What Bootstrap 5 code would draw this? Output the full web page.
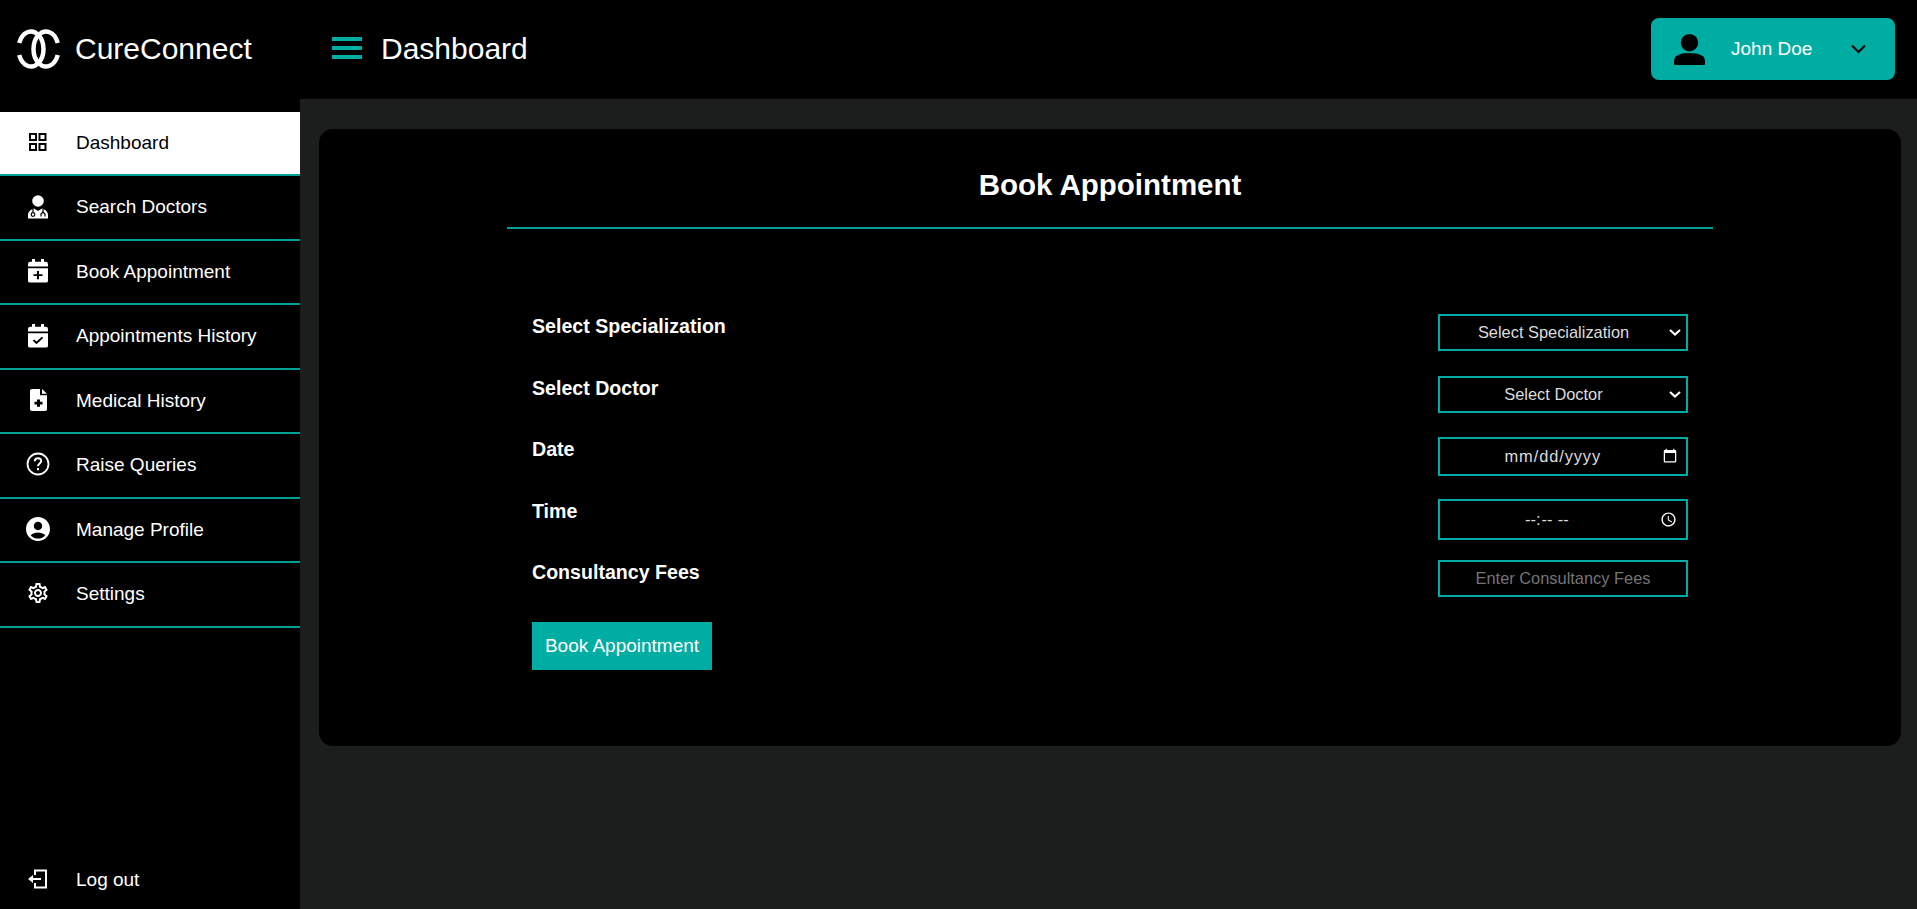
<!DOCTYPE html>
<html lang="en">
<head>
    <meta charset="UTF-8">
    <meta name="viewport" content="width=device-width, initial-scale=1.0">
    <title>CureConnect - Book Appointment</title>
    <link href="https://cdn.jsdelivr.net/npm/bootstrap@5.3.0/dist/css/bootstrap.min.css" rel="stylesheet">
    <style>
        html, body { height: 100%; }
        body { background: #000; color: #fff; font-family: "Liberation Sans", Arial, sans-serif; overflow: hidden; }
        .top-bar { height: 99px; padding-bottom: 1px; background: #000; }
        .brand-box { width: 300px; padding-left: 16px; }
        .brand-name { font-size: 30px; margin: -2px 0 0 14px; }
        .menu-toggle { width: 30px; height: 22px; margin: -2px 0 0 32px; }
        .page-title { font-size: 30px; margin: -2px 0 0 19px; }
        .profile-btn { width: 244px; height: 62px; margin-right: 22px; background: #00ada3; border-radius: 8px; padding: 0 29px 0 23px; color: #fff; font-size: 19px; }
        .profile-name { margin-left: 26px; }
        .side-panel { width: 300px; padding-top: 13px; background: #000; }
        .side-link { height: 64.45px; padding: 0 0 0 76px; color: #fff; font-size: 19px; border-bottom: 2px solid #00a096; text-decoration: none; position: relative; }
        .side-link.current { background: #fff; color: #000; }
        .side-link svg { position: absolute; left: 26px; top: 50%; transform: translateY(-50%); margin-top: -1px; }
        .logout-link { height: 58px; padding: 0 0 0 76px; color: #fff; font-size: 19px; text-decoration: none; position: relative; }
        .logout-link svg { position: absolute; left: 26px; top: 50%; transform: translateY(-50%); margin-top: -1px; }
        .main-area { background: #1c1e1d; padding: 30px 16px 0 19px; }
        .form-panel { height: 617px; background: #000; border-radius: 14px; padding: 0 188px; }
        .form-heading { font-size: 29.5px; font-weight: 700; text-align: center; margin: 0; height: 100px; padding-top: 38px; border-bottom: 2px solid #00a096; line-height: 36px; }
        .form-body { padding: 85px 25px 0; }
        .field-row { height: 61.6px; }
        .field-label { font-size: 19.6px; font-weight: 700; margin: 0; line-height: 24px; }
        .field-input { width: 250px; height: 37px; background-color: #000; color: #ddd; border: 2px solid #00ada3; border-radius: 0; font-size: 16.4px; font-family: inherit; text-align: center; color-scheme: dark; outline: none; padding: 0 6px; }
        .field-input::placeholder { color: #757575; }
        select.field-input { appearance: none; padding: 0 23px 0 4px; background-image: url("data:image/svg+xml,%3csvg xmlns='http://www.w3.org/2000/svg' viewBox='0 0 12 7'%3e%3cpath fill='none' stroke='%23fff' stroke-width='2.2' d='M1 1l5 4.500 5-4.500'/%3e%3c/svg%3e"); background-repeat: no-repeat; background-position: right 5px center; background-size: 12px 7px; }
        select.field-input:focus { border-color: #00ada3; box-shadow: none; background-color: #000; color: #ddd; }
        .date-input { height: 39px; letter-spacing: .9px; }
        .time-input { height: 41px; letter-spacing: 2px; }
        .book-btn { width: 180px; height: 48px; background: #00ada3; color: #fff; border: 0; border-radius: 0; font-size: 19px; padding: 0; }
        .book-btn:hover { background: #00ada3; color: #fff; }
    </style>
</head>
<body>
    <div class="d-flex flex-column h-100">
        <header class="top-bar d-flex align-items-center flex-shrink-0">
            <div class="brand-box d-flex align-items-center">
                <svg width="45" height="42" viewBox="0 0 45 42" fill="none" stroke="#fff" stroke-width="4.500">
                    <path d="M3.250 15 A12.500 17.500 0 1 1 3.250 27"/>
                    <path d="M41.750 15 A12.500 17.500 0 1 0 41.750 27"/>
                </svg>
                <span class="brand-name">CureConnect</span>
            </div>
            <div class="d-flex align-items-center flex-grow-1">
                <svg class="menu-toggle" viewBox="0 0 30 22" fill="#00ada3">
                    <rect x="0" y="0" width="30" height="4"/>
                    <rect x="0" y="9" width="30" height="4"/>
                    <rect x="0" y="18" width="30" height="4"/>
                </svg>
                <span class="page-title">Dashboard</span>
            </div>
            <button class="btn profile-btn d-flex align-items-center border-0" type="button">
                <svg width="31" height="31" viewBox="0 0 31 31" fill="#000">
                    <circle cx="15.500" cy="8.700" r="8.700"/>
                    <path d="M0 30v-3c0-5 5-8 15.500-8s15.500 3 15.500 8v3a1 1 0 0 1-1 1H1a1 1 0 0 1-1-1z"/>
                </svg>
                <span class="profile-name">John Doe</span>
                <svg class="ms-auto" width="15" height="10" viewBox="0 0 15 10" fill="none" stroke="#000" stroke-width="2"><path d="M1 1.500l6.500 6.500 6.500-6.500"/></svg>
            </button>
        </header>

        <div class="d-flex flex-grow-1 overflow-hidden">
            <aside class="side-panel d-flex flex-column flex-shrink-0">
                <a class="side-link current d-flex align-items-center" href="#">
                    <svg width="24" height="24" viewBox="0 0 24 24" fill="none" stroke="#000" stroke-width="2">
                        <rect x="4" y="4" width="6" height="6"/><rect x="13.500" y="4" width="6" height="6"/><rect x="4" y="14" width="6" height="6"/><rect x="13.500" y="14" width="6" height="6"/>
                    </svg>
                    Dashboard
                </a>
                <a class="side-link d-flex align-items-center" href="#">
                    <svg width="24" height="24" viewBox="0 0 24 24" fill="#fff">
                        <circle cx="12" cy="6" r="5.800"/>
                        <path d="M2 23.500v-3.500c0-3.500 3-5.500 6-6.500l4 2.500 4-2.500c3 1 6 3 6 6.500v3.500z"/>
                        <path d="M7 14v3.500M17 14v3" stroke="#000" stroke-width="1.200" fill="none"/>
                        <circle cx="7" cy="19.500" r="1.800" fill="none" stroke="#000" stroke-width="1.200"/>
                        <path d="M15 21.500v-2.500l2-2 2 2v2.500" fill="none" stroke="#000" stroke-width="1.200"/>
                    </svg>
                    Search Doctors
                </a>
                <a class="side-link d-flex align-items-center" href="#">
                    <svg width="24" height="24" viewBox="0 0 24 26" preserveAspectRatio="none" fill="#fff">
                        <path d="M6 0h3v3h6V0h3v3h1.500A2.500 2.500 0 0 1 22 5.500V8H2V5.500A2.500 2.500 0 0 1 4.500 3H6z"/>
                        <path d="M2 10h20v13.500a2 2 0 0 1-2 2H4a2 2 0 0 1-2-2z"/>
                        <path d="M12 13v9M7.500 17.500h9" stroke="#000" stroke-width="2"/>
                    </svg>
                    Book Appointment
                </a>
                <a class="side-link d-flex align-items-center" href="#">
                    <svg width="24" height="24" viewBox="0 0 24 26" preserveAspectRatio="none" fill="#fff">
                        <path d="M6 0h3v3h6V0h3v3h1.500A2.500 2.500 0 0 1 22 5.500V8H2V5.500A2.500 2.500 0 0 1 4.500 3H6z"/>
                        <path d="M2 10h20v13.500a2 2 0 0 1-2 2H4a2 2 0 0 1-2-2z"/>
                        <path d="M7.500 17.500l3 3 6-6" fill="none" stroke="#000" stroke-width="2"/>
                    </svg>
                    Appointments History
                </a>
                <a class="side-link d-flex align-items-center" href="#">
                    <svg width="24" height="23" viewBox="0 0 24 26" preserveAspectRatio="none" fill="#fff">
                        <path d="M6 .5h8v7h7v16a2 2 0 0 1-2 2H6a2 2 0 0 1-2-2v-21a2 2 0 0 1 2-2z"/>
                        <path d="M16 .5l5 5.500h-5z"/>
                        <path d="M12.500 12.500v8M8.500 16.500h8" stroke="#000" stroke-width="3"/>
                    </svg>
                    Medical History
                </a>
                <a class="side-link d-flex align-items-center" href="#">
                    <svg width="24" height="24" viewBox="0 0 24 24" fill="none" stroke="#fff" stroke-width="1.800">
                        <circle cx="12" cy="12" r="10.500"/>
                        <path d="M8.800 9.300c0-2 1.500-3 3.200-3s3.200 1 3.200 2.800c0 2.400-3.200 2.400-3.200 5.100" stroke-width="2"/>
                        <path d="M12 16v2.200" stroke-width="2"/>
                    </svg>
                    Raise Queries
                </a>
                <a class="side-link d-flex align-items-center" href="#">
                    <svg width="24" height="24" viewBox="2 2 20 20" fill="#fff">
                        <path d="M12 2C6.480 2 2 6.480 2 12s4.480 10 10 10 10-4.480 10-10S17.520 2 12 2zm0 4c1.930 0 3.500 1.570 3.500 3.500S13.930 13 12 13s-3.500-1.570-3.500-3.500S10.070 6 12 6zm0 14c-2.030 0-4.430-.820-6.140-2.880C7.550 15.800 9.680 15 12 15s4.450.800 6.140 2.120C16.430 19.180 14.030 20 12 20z"/>
                    </svg>
                    Manage Profile
                </a>
                <a class="side-link d-flex align-items-center" href="#">
                    <svg width="24" height="24" viewBox="0 0 24 24" fill="#fff">
                        <path d="M19.430 12.980c.040-.320.070-.640.070-.980 0-.340-.030-.660-.070-.980l2.110-1.650c.190-.150.240-.420.120-.640l-2-3.460c-.090-.160-.260-.250-.440-.250-.060 0-.120.010-.170.030l-2.490 1c-.520-.400-1.080-.730-1.690-.980l-.380-2.650C14.460 2.180 14.250 2 14 2h-4c-.250 0-.460.180-.490.420l-.380 2.650c-.610.250-1.170.590-1.690.980l-2.490-1c-.060-.020-.120-.030-.180-.030-.170 0-.340.090-.430.250l-2 3.460c-.130.220-.070.490.120.640l2.110 1.650c-.040.320-.070.650-.070.980 0 .330.030.660.070.980l-2.110 1.650c-.190.150-.240.420-.120.640l2 3.460c.090.160.260.250.440.250.060 0 .120-.010.170-.030l2.490-1c.520.400 1.080.730 1.690.980l.380 2.650c.030.240.240.420.49.420h4c.250 0 .460-.180.490-.420l.380-2.650c.610-.250 1.170-.590 1.690-.980l2.490 1c.060.020.120.030.180.030.170 0 .340-.090.430-.250l2-3.460c.120-.220.070-.490-.120-.640l-2.110-1.650zm-1.980-1.710c.040.310.050.520.050.730 0 .210-.020.430-.050.730l-.140 1.130.890.700 1.080.840-.700 1.210-1.270-.510-1.040-.420-.900.680c-.430.320-.840.560-1.250.730l-1.060.43-.160 1.130-.200 1.350h-1.400l-.190-1.350-.160-1.130-1.060-.43c-.430-.180-.830-.410-1.230-.710l-.910-.700-1.060.43-1.270.510-.700-1.210 1.080-.84.890-.700-.140-1.130c-.030-.310-.050-.540-.050-.740s.020-.430.050-.730l.140-1.130-.89-.700-1.080-.84.700-1.210 1.270.510 1.040.420.900-.680c.430-.320.840-.560 1.250-.730l1.060-.43.160-1.130.200-1.350h1.390l.190 1.350.160 1.130 1.060.43c.430.180.830.410 1.230.710l.910.700 1.060-.43 1.270-.510.700 1.210-1.070.85-.89.700.140 1.130zM12 8c-2.210 0-4 1.790-4 4s1.790 4 4 4 4-1.790 4-4-1.790-4-4-4zm0 6c-1.100 0-2-.900-2-2s.900-2 2-2 2 .900 2 2-.900 2-2 2z"/>
                    </svg>
                    Settings
                </a>
                <a class="logout-link d-flex align-items-center mt-auto" href="#">
                    <svg width="24" height="24" viewBox="0 0 24 24" fill="none" stroke="#fff" stroke-width="2">
                        <path d="M9 8V3.500h11v17H9V16"/>
                        <path d="M15 12H5"/>
                        <path d="M7 8l-5 4 5 4z" fill="#fff" stroke="none"/>
                    </svg>
                    Log out
                </a>
            </aside>

            <main class="main-area flex-grow-1">
                <div class="form-panel">
                    <h1 class="form-heading">Book Appointment</h1>
                    <form class="form-body">
                        <div class="field-row d-flex justify-content-between">
                            <label class="field-label" for="spec">Select Specialization</label>
                            <select class="field-input" id="spec"><option>Select Specialization</option></select>
                        </div>
                        <div class="field-row d-flex justify-content-between">
                            <label class="field-label" for="doc">Select Doctor</label>
                            <select class="field-input" id="doc"><option>Select Doctor</option></select>
                        </div>
                        <div class="field-row d-flex justify-content-between">
                            <label class="field-label" for="date">Date</label>
                            <input class="field-input date-input" id="date" type="date">
                        </div>
                        <div class="field-row d-flex justify-content-between">
                            <label class="field-label" for="time">Time</label>
                            <input class="field-input time-input" id="time" type="time">
                        </div>
                        <div class="field-row d-flex justify-content-between">
                            <label class="field-label" for="fees">Consultancy Fees</label>
                            <input class="field-input" id="fees" type="text" placeholder="Enter Consultancy Fees">
                        </div>
                        <button class="btn book-btn" type="button">Book Appointment</button>
                    </form>
                </div>
            </main>
        </div>
    </div>
    <script src="https://cdn.jsdelivr.net/npm/bootstrap@5.3.0/dist/js/bootstrap.bundle.min.js"></script>
</body>
</html>
